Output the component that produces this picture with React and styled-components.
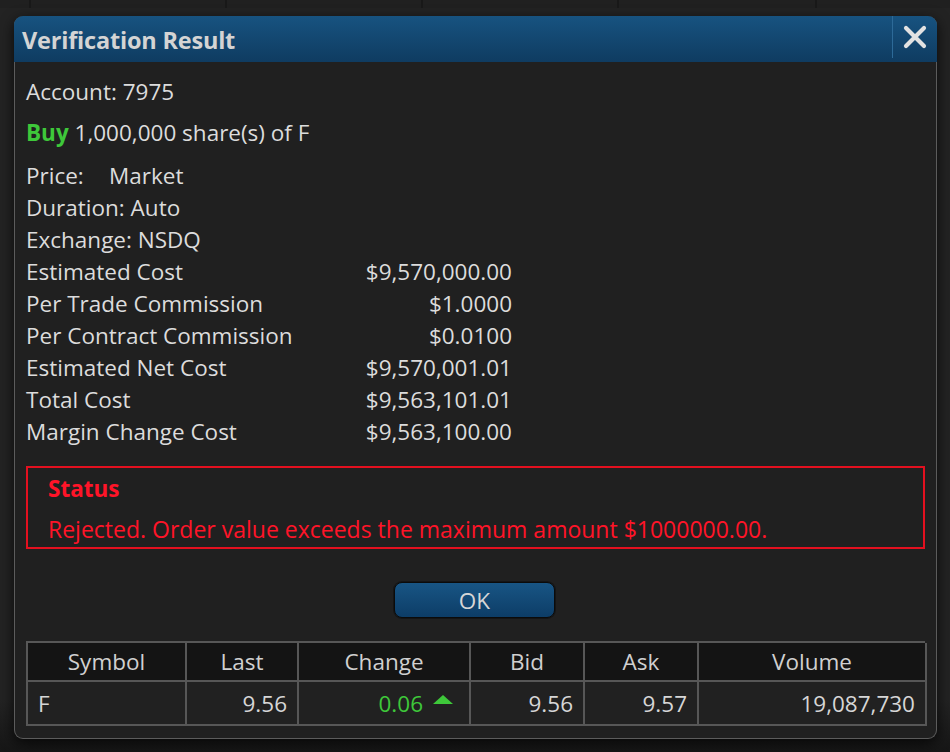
import React from 'react';
import styled, { createGlobalStyle } from 'styled-components';

const GlobalStyle = createGlobalStyle`
  html, body {
    margin: 0;
    padding: 0;
    background: #232323;
  }
  body {
    font-family: 'Open Sans', 'Noto Sans', sans-serif;
    color: #dcdcdc;
  }
`;

const Page = styled.div`
  width: 950px;
  height: 752px;
  overflow: hidden;
  background: linear-gradient(#232323 0, #232323 700px, #161616 752px);
`;

const TopStrip = styled.div`
  height: 8px;
  display: flex;
  background: #202020;
  margin-bottom: 8px;
`;

const StripCell = styled.div`
  width: ${(p) => p.$w}px;
  border-right: 2px solid #181818;
`;

const Dialog = styled.div`
  margin-left: 14px;
  width: 923px;
  height: 723px;
  box-sizing: border-box;
  background: #202020;
  border: 1px solid #5c5c5c;
  border-top: none;
  border-radius: 9px;
  box-shadow: 0 4px 14px rgba(0, 0, 0, 0.75);
  display: flex;
  flex-direction: column;
`;

const TitleBar = styled.div`
  height: 46px;
  margin: 0 -1px;
  display: flex;
  align-items: stretch;
  border-radius: 9px 9px 0 0;
  background: linear-gradient(#175380, #0f3c61);
`;

const Title = styled.div`
  flex: 1;
  display: flex;
  align-items: center;
  padding: 1px 0 0 8px;
  font-size: 23.5px;
  font-weight: 700;
  color: #d4d4d4;
  letter-spacing: -0.2px;
`;

const CloseButton = styled.div`
  width: 44px;
  display: flex;
  align-items: center;
  justify-content: center;
  border-left: 1px solid #2d6a98;
  margin: 0 0 4px;
`;

const Body = styled.div`
  padding: 14px 11px 0 11px;
  display: flex;
  flex-direction: column;
  font-size: 22.5px;
`;

const Line = styled.div`
  height: 32px;
  line-height: 32px;
  white-space: nowrap;
  margin-bottom: ${(p) => p.$gap || 0}px;
`;

const Buy = styled.span`
  color: #3ec83a;
  font-weight: 700;
`;

const FixedLabel = styled.span`
  display: inline-block;
  width: ${(p) => p.$w}px;
`;

const CostRow = styled.div`
  width: 486px;
  height: 32px;
  line-height: 32px;
  display: flex;
  justify-content: space-between;
  white-space: nowrap;
`;

const StatusBox = styled.div`
  margin-top: 18px;
  height: 83px;
  box-sizing: border-box;
  border: 2px solid #e3101f;
  padding: 5px 20px 0;
  color: #ff1428;
`;

const StatusTitle = styled.div`
  height: 32px;
  line-height: 32px;
  font-weight: 700;
  margin-bottom: 8px;
`;

const StatusText = styled.div`
  height: 32px;
  line-height: 32px;
  font-size: 23px;
  white-space: nowrap;
`;

const ButtonRow = styled.div`
  display: flex;
  justify-content: center;
  margin-top: 33px;
  padding-right: 2px;
`;

const OkButton = styled.button`
  width: 161px;
  height: 36px;
  border: 1px solid #0b0b0b;
  border-radius: 8px;
  background: linear-gradient(#185584, #0d3d67);
  box-shadow: 0 0 0 1px #151515;
  color: #d6d6d6;
  font-family: 'Open Sans', 'Noto Sans', sans-serif;
  font-size: 22.5px;
  padding: 0;
  cursor: pointer;
`;

const Table = styled.div`
  margin-top: 23px;
  display: grid;
  grid-template-columns: 159px 112px 172px 114px 114px 228px;
  border: 2px solid #575757;
  border-right: none;
  border-bottom: none;
`;

const HeadCell = styled.div`
  height: 37px;
  line-height: 37px;
  text-align: center;
  background: #141414;
  color: #d0d0d0;
  border-right: 2px solid #575757;
  border-bottom: 2px solid #575757;
`;

const Cell = styled.div`
  height: 42px;
  display: flex;
  align-items: center;
  justify-content: ${(p) => (p.$left ? 'flex-start' : 'flex-end')};
  gap: 10px;
  padding: 0 ${(p) => p.$pr || 10}px 0 10px;
  background: #212121;
  color: ${(p) => p.$color || '#d6d6d6'};
  border-right: 2px solid #575757;
  border-bottom: 2px solid #575757;
  white-space: nowrap;
`;

const UpArrow = styled.span`
  width: 0;
  height: 0;
  border-left: 10px solid transparent;
  border-right: 10px solid transparent;
  border-bottom: 9px solid #3ec83a;
  margin-bottom: 8px;
`;

const costs = [
  ['Estimated Cost', '$9,570,000.00'],
  ['Per Trade Commission', '$1.0000'],
  ['Per Contract Commission', '$0.0100'],
  ['Estimated Net Cost', '$9,570,001.01'],
  ['Total Cost', '$9,563,101.01'],
  ['Margin Change Cost', '$9,563,100.00'],
];

const columns = ['Symbol', 'Last', 'Change', 'Bid', 'Ask', 'Volume'];

export default function App() {
  return (
    <Page>
      <GlobalStyle />
      <TopStrip>
        <StripCell $w={29} />
        <StripCell $w={194} />
        <StripCell $w={194} />
        <StripCell $w={194} />
        <StripCell $w={196} />
      </TopStrip>
      <Dialog>
        <TitleBar>
          <Title>Verification Result</Title>
          <CloseButton>
            <svg width="24" height="24" viewBox="0 0 24 24">
              <path d="M3 3 L21 21 M21 3 L3 21" stroke="#e2e2e2" strokeWidth="4.2" strokeLinecap="round" />
            </svg>
          </CloseButton>
        </TitleBar>
        <Body>
          <Line $gap={9}>Account: 7975</Line>
          <Line $gap={11}>
            <Buy>Buy</Buy> 1,000,000 share(s) of F
          </Line>
          <Line>
            <FixedLabel $w={83}>Price:</FixedLabel>Market
          </Line>
          <Line>Duration: Auto</Line>
          <Line>Exchange: NSDQ</Line>
          {costs.map(([label, value]) => (
            <CostRow key={label}>
              <span>{label}</span>
              <span>{value}</span>
            </CostRow>
          ))}
          <StatusBox>
            <StatusTitle>Status</StatusTitle>
            <StatusText>Rejected. Order value exceeds the maximum amount $1000000.00.</StatusText>
          </StatusBox>
          <ButtonRow>
            <OkButton>OK</OkButton>
          </ButtonRow>
          <Table>
            {columns.map((c) => (
              <HeadCell key={c}>{c}</HeadCell>
            ))}
            <Cell $left>F</Cell>
            <Cell>9.56</Cell>
            <Cell $color="#3ec83a" $pr={16}>
              0.06 <UpArrow />
            </Cell>
            <Cell>9.56</Cell>
            <Cell>9.57</Cell>
            <Cell>19,087,730</Cell>
          </Table>
        </Body>
      </Dialog>
    </Page>
  );
}
